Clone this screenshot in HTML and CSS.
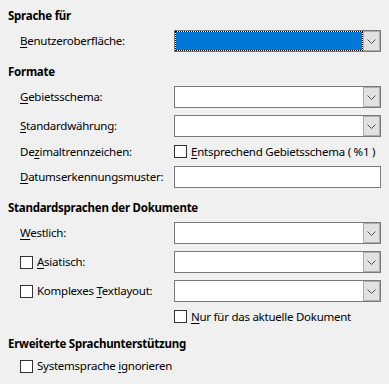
FILE: index.html
```
<!DOCTYPE html>
<html lang="de">
<head>
    <meta charset="UTF-8">
    <meta name="viewport" content="width=device-width, initial-scale=1.0">
    <title>Spracheinstellungen</title>
    <link rel="stylesheet" href="styles.css">
</head>
<body>
    <div class="options-page">
        <div class="group">
            <div class="group-title">Sprache für</div>
            <div class="rows">
                <div class="label"><u>B</u>enutzeroberfläche:</div>
                <div class="combo focused">
                    <span class="combo-value"></span>
                    <span class="combo-button"><svg width="9" height="5" viewBox="0 0 9 5"><path d="M0.5 0.5 L4.5 4.5 L8.5 0.5" fill="none" stroke="#505050" stroke-width="1"/></svg></span>
                </div>
            </div>
        </div>

        <div class="group">
            <div class="group-title">Formate</div>
            <div class="rows">
                <div class="label"><u>G</u>ebietsschema:</div>
                <div class="combo">
                    <span class="combo-value"></span>
                    <span class="combo-button"><svg width="9" height="5" viewBox="0 0 9 5"><path d="M0.5 0.5 L4.5 4.5 L8.5 0.5" fill="none" stroke="#505050" stroke-width="1"/></svg></span>
                </div>

                <div class="label"><u>S</u>tandardwährung:</div>
                <div class="combo">
                    <span class="combo-value"></span>
                    <span class="combo-button"><svg width="9" height="5" viewBox="0 0 9 5"><path d="M0.5 0.5 L4.5 4.5 L8.5 0.5" fill="none" stroke="#505050" stroke-width="1"/></svg></span>
                </div>

                <div class="label check-row">De<u>z</u>imaltrennzeichen:</div>
                <label class="check check-row"><span class="box"></span><span><u>E</u>ntsprechend Gebietsschema ( %1 )</span></label>

                <div class="label"><u>D</u>atumserkennungsmuster:</div>
                <div class="entry"></div>
            </div>
        </div>

        <div class="group">
            <div class="group-title">Standardsprachen der Dokumente</div>
            <div class="rows">
                <div class="label"><u>W</u>estlich:</div>
                <div class="combo">
                    <span class="combo-value"></span>
                    <span class="combo-button"><svg width="9" height="5" viewBox="0 0 9 5"><path d="M0.5 0.5 L4.5 4.5 L8.5 0.5" fill="none" stroke="#505050" stroke-width="1"/></svg></span>
                </div>

                <label class="check"><span class="box"></span><span><u>A</u>siatisch:</span></label>
                <div class="combo">
                    <span class="combo-value"></span>
                    <span class="combo-button"><svg width="9" height="5" viewBox="0 0 9 5"><path d="M0.5 0.5 L4.5 4.5 L8.5 0.5" fill="none" stroke="#505050" stroke-width="1"/></svg></span>
                </div>

                <label class="check"><span class="box"></span><span>Komplexes <u>T</u>extlayout:</span></label>
                <div class="combo">
                    <span class="combo-value"></span>
                    <span class="combo-button"><svg width="9" height="5" viewBox="0 0 9 5"><path d="M0.5 0.5 L4.5 4.5 L8.5 0.5" fill="none" stroke="#505050" stroke-width="1"/></svg></span>
                </div>

                <div class="check-row"></div>
                <label class="check check-row"><span class="box"></span><span><u>N</u>ur für das aktuelle Dokument</span></label>
            </div>
        </div>

        <div class="group">
            <div class="group-title">Erweiterte Sprachunterstützung</div>
            <div class="single">
                <label class="check"><span class="box"></span><span>Systemsprache <u>i</u>gnorieren</span></label>
            </div>
        </div>
    </div>
</body>
</html>
```

FILE: styles.css
```
/* Dialog page */
body {
    margin: 0;
    background: #f0f0f0;
    font-family: 'Noto Sans', sans-serif;
    font-size: 11.5px;
    letter-spacing: -0.25px;
    color: #000;
}

.options-page {
    padding: 8px 8px 0 8px;
}

.group + .group {
    margin-top: 12px;
}

.group-title {
    font-weight: bold;
    line-height: 16px;
    margin-bottom: 6px;
}

.rows {
    display: grid;
    grid-template-columns: 154px 207px;
    row-gap: 7px;
    align-items: center;
    padding-left: 12px;
}

.single {
    padding-left: 12px;
}

.label {
    line-height: 16px;
    white-space: nowrap;
}

u {
    text-decoration-thickness: 1px;
    text-underline-offset: 2px;
}

.check-row {
    height: 15px;
}

.check {
    display: flex;
    align-items: center;
    gap: 4px;
    line-height: 16px;
    white-space: nowrap;
}

.box {
    width: 13px;
    height: 13px;
    box-sizing: border-box;
    border: 1px solid #333;
    background: #fff;
    flex: none;
}

.combo {
    display: flex;
    height: 22px;
    box-sizing: border-box;
    border: 1px solid #7a7a7a;
    background: #fff;
}

.combo-value {
    flex: 1;
}

.combo.focused .combo-value {
    border: 1px dotted #000;
    background: linear-gradient(#0078d7, #0078d7) padding-box, border-box #fff;
}

.combo-button {
    width: 17px;
    box-sizing: border-box;
    border: 1px solid #adadad;
    background: #e1e1e1;
    display: flex;
    align-items: center;
    justify-content: center;
}

.entry {
    height: 22px;
    box-sizing: border-box;
    border: 1px solid #7a7a7a;
    background: #fff;
}
```
